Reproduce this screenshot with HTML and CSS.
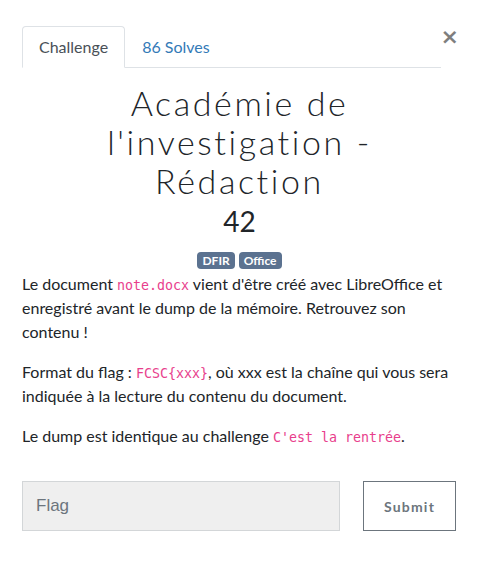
FILE: index.html
```html
<!DOCTYPE html>
<html lang="fr">
<head>
<meta charset="utf-8">
<link rel="stylesheet" href="styles.css">
</head>
<body>
<div class="modal">
  <div class="head">
    <ul class="tabs">
      <li class="tab active">Challenge</li>
      <li class="tab link">86 Solves</li>
    </ul>
    <button class="close" aria-label="Close">×</button>
  </div>
  <div class="body">
    <h2 class="name">Académie de l'investigation - Rédaction</h2>
    <h3 class="value">42</h3>
    <div class="tags"><span class="badge">DFIR</span><span class="badge">Office</span></div>
    <div class="desc">
      <p>Le document <code>note.docx</code> vient d'être créé avec LibreOffice et enregistré avant le dump de la mémoire. Retrouvez son contenu !</p>
      <p>Format du flag : <code>FCSC{xxx}</code>, où xxx est la chaîne qui vous sera indiquée à la lecture du contenu du document.</p>
      <p>Le dump est identique au challenge <code>C'est la rentrée</code>.</p>
    </div>
    <form class="submit-row">
      <input class="flag" type="text" placeholder="Flag">
      <button class="btn" type="button">Submit</button>
    </form>
  </div>
</div>
</body>
</html>
```
FILE: styles.css
```css
* { box-sizing: border-box; }
html, body { margin: 0; background: #fff; }
body {
  font-family: Lato, "Open Sans", sans-serif;
  font-size: 16px;
  line-height: 1.5;
  color: #212529;
}
.modal { padding: 26px 22px 0 22px; }
.head { display: flex; align-items: flex-start; }
.tabs {
  list-style: none; margin: 0; padding: 0;
  display: flex; width: 420px;
  border-bottom: 1px solid #dee2e6;
}
.tab {
  padding: 8px 16px;
  border: 1px solid transparent;
  border-top-left-radius: 4px; border-top-right-radius: 4px;
  margin-bottom: -1px;
  color: #495057;
}
.tab.active { border-color: #dee2e6 #dee2e6 #fff; background: #fff; }
.tab.link { color: #337ab7; }
.close {
  margin-left: auto; margin-right: -2px;
  background: none; border: 0; padding: 0;
  font-family: "DejaVu Sans", sans-serif;
  font-size: 22px; font-weight: 700; line-height: 1;
  color: #000; opacity: .5;
  margin-top: 0;
}
.body { text-align: left; }
.name {
  margin: 15px 0 0 0;
  text-align: center;
  font-family: Lato, sans-serif;
  font-weight: 300;
  font-size: 34px;
  line-height: 39px;
  letter-spacing: 2.6px;
  padding: 0 50px;
  color: #212529;
}
.value {
  margin: 4px 0 0 0; text-align: center;
  font-weight: 400; font-size: 28px; line-height: 34px;
}
.tags { text-align: center; margin-top: 14px; line-height: 17px; height: 17px; }
.badge {
  display: inline-block;
  background: #5b7290; color: #fff;
  font-size: 12px; font-weight: 700; line-height: 1;
  padding: 3px 5px 2px;
  border-radius: 4px;
  margin: 0 2px;
  vertical-align: top;
}
.desc { margin-top: 3px; }
.desc p { margin: 0 0 16px 0; }
code {
  font-family: "DejaVu Sans Mono", monospace;
  font-size: 13.3px;
  color: #e83e8c;
}
.submit-row { display: flex; gap: 23px; margin-top: 33px; width: 434px; }
.flag {
  width: 318px; height: 50px;
  background: #efefef;
  border: 1px solid #d3d6d8;
  padding: 0 13px;
  font-family: "Liberation Sans", Arial, sans-serif;
  font-size: 17px;
  color: #495057;
}
.flag::placeholder { color: #6c757d; }
.btn {
  width: 93px; height: 50px;
  background: #fff;
  border: 1px solid #6c757d;
  font-family: Lato, sans-serif;
  font-weight: 700; font-size: 14px; letter-spacing: 1.2px;
  color: #6c757d;
}
```
